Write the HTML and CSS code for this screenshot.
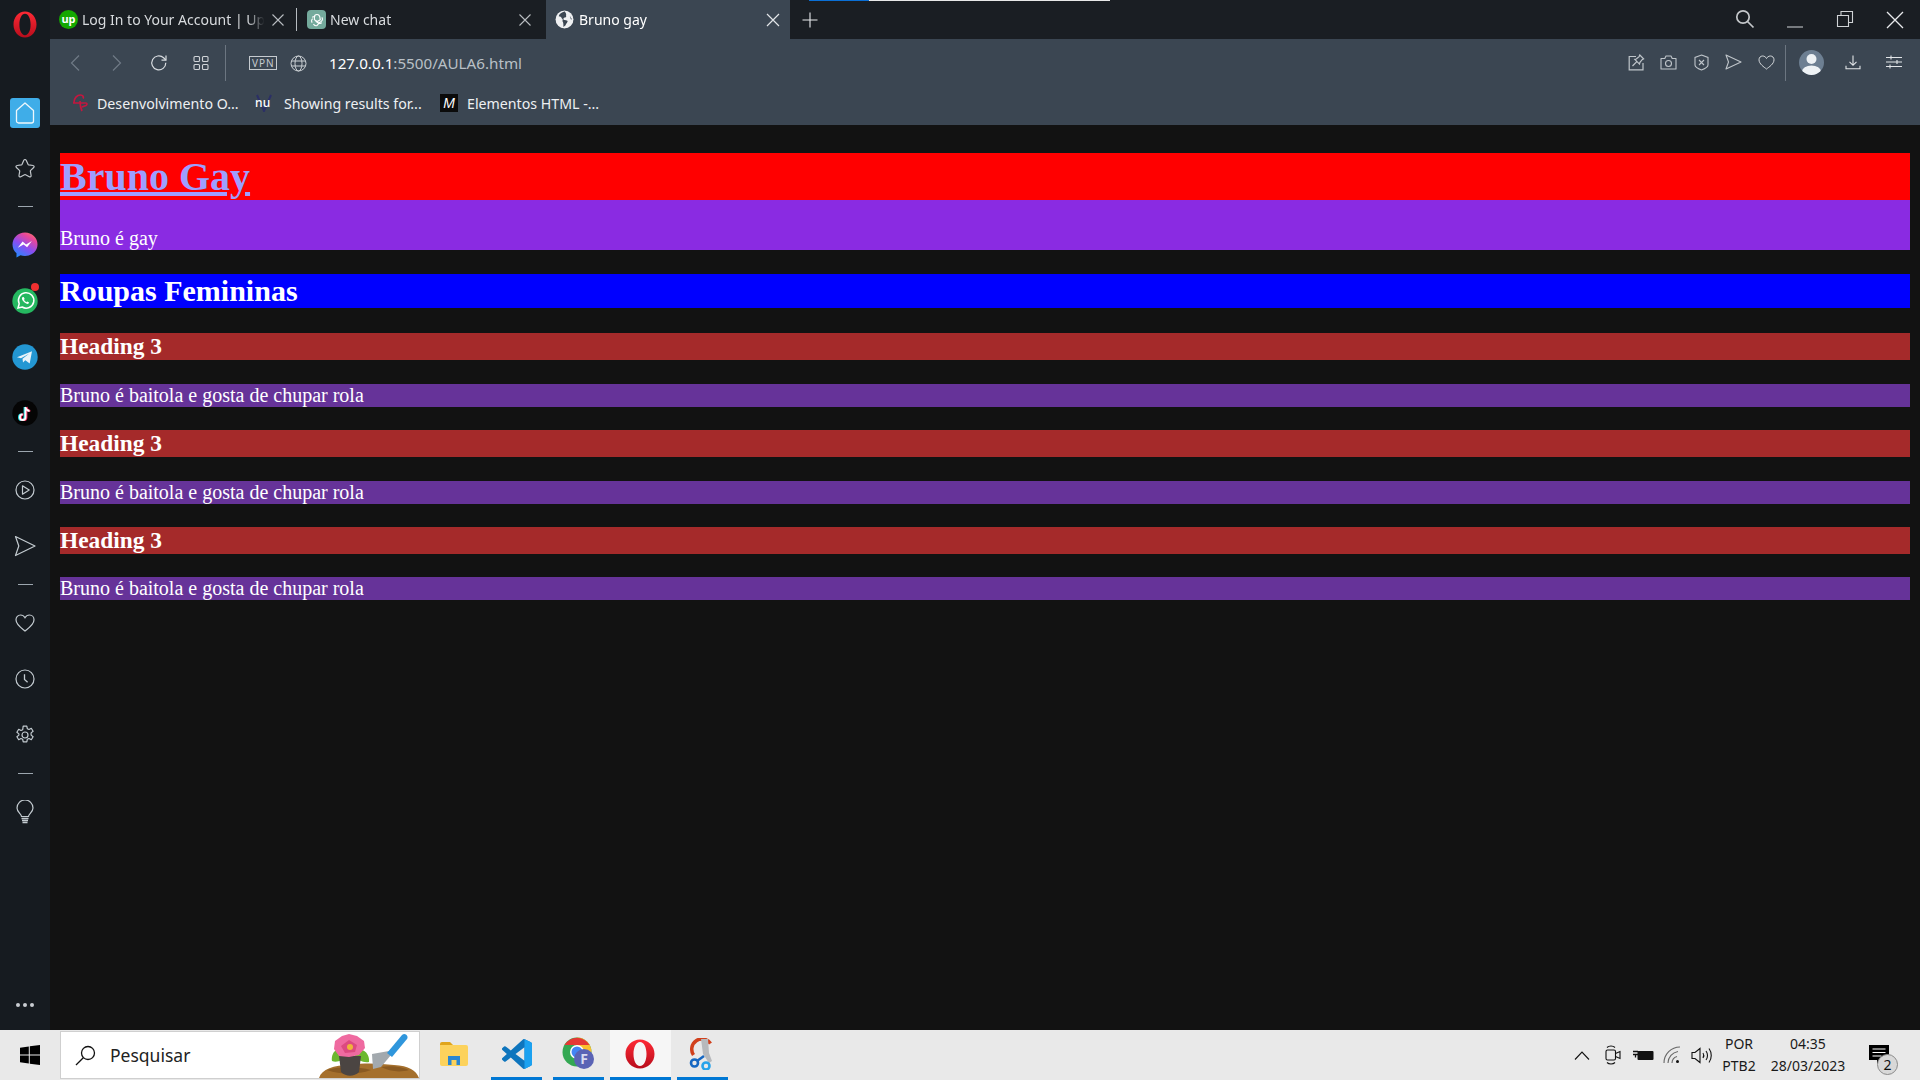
FILE: index.html
```html
<!DOCTYPE html>
<html lang="pt">
<head>
<meta charset="utf-8">
<title>Bruno gay</title>
<link rel="stylesheet" href="styles.css">
</head>
<body>
<div class="screen">
  <div class="app">
    <aside class="rail">
      <div class="rail-logo">
        <svg width="24" height="27" viewBox="0 0 24 27"><defs><linearGradient id="op" x1="0" y1="0" x2="0" y2="1"><stop offset="0" stop-color="#ff2a35"/><stop offset="1" stop-color="#b80d1c"/></linearGradient></defs><path fill="url(#op)" fill-rule="evenodd" d="M12 0.500C18.600 0.500 23.500 6.200 23.500 13.500S18.600 26.500 12 26.500 0.500 20.800 0.500 13.500 5.400 0.500 12 0.500ZM12 2.800C8.600 2.800 6.400 7.600 6.400 13.500S8.600 24.200 12 24.200 17.600 19.400 17.600 13.500 15.400 2.800 12 2.800Z"/></svg>
      </div>
      <div class="slot-v slot-home">
        <div class="home-tile"><svg width="20" height="22" viewBox="0 0 20 22"><path d="M10 1L18.500 8.500V19a2 2 0 0 1-2 2H3.500a2 2 0 0 1-2-2V8.500Z" fill="none" stroke="#eef7fc" stroke-width="1.300" stroke-linejoin="round"/></svg></div>
      </div>
      <div class="slot-v"><svg width="22" height="21" viewBox="0 0 22 21"><path d="M11 1.500c.6 0 1 .4 1.300 1L14 6.200c.2.400.5.600.9.700l4.100.6c1.100.2 1.500 1.300.7 2l-3 2.900c-.3.300-.4.700-.3 1l.7 4.100c.2 1.100-.9 1.800-1.800 1.300l-3.700-2c-.4-.2-.7-.2-1.100 0l-3.700 2c-.9.500-2-.2-1.800-1.300l.7-4.100c.1-.3 0-.7-.3-1l-3-2.900c-.8-.7-.4-1.800.7-2l4.100-.6c.4-.1.700-.3.900-.7L9.700 2.500c.3-.6.700-1 1.300-1Z" fill="none" stroke="#c3c8cc" stroke-width="1.200"/></svg></div>
      <div class="rail-div"></div>
      <div class="slot-v">
        <svg width="26" height="26" viewBox="0 0 26 26"><defs><linearGradient id="ms" x1="0.200" y1="1" x2="0.800" y2="0"><stop offset="0" stop-color="#1e8cff"/><stop offset="0.450" stop-color="#8b4df0"/><stop offset="0.800" stop-color="#e8479a"/><stop offset="1" stop-color="#f8746a"/></linearGradient></defs><path fill="url(#ms)" d="M13 .5C6 .5.500 5.600.500 12.400c0 3.600 1.500 6.700 4 8.800V25.500l4-2.200c1.400.4 2.900.6 4.500.6 7 0 12.500-5 12.500-11.500S20 .5 13 .5Z"/><path fill="#fff" d="M5.800 15.800l4.800-6.200 3.500 2.800 5.800-3.300-4.800 6.200-3.500-2.800Z"/></svg>
      </div>
      <div class="slot-v badge-host">
        <svg width="26" height="26" viewBox="0 0 26 26"><circle cx="13" cy="13" r="12.700" fill="#25b860"/><path d="M6 20l1.200-4.300A7.700 7.700 0 1 1 10.200 19Z" fill="none" stroke="#fff" stroke-width="1.500"/><path d="M10.300 9.300c-1 1 0 3.200 1.700 4.800s3.700 2.400 4.600 1.400l.5-.9-1.900-1.100-.8.700c-.8-.3-2-1.500-2.400-2.400l.7-.8-1-1.900Z" fill="#fff"/></svg>
        <span class="dot-red"></span>
      </div>
      <div class="slot-v">
        <svg width="26" height="26" viewBox="0 0 26 26"><circle cx="13" cy="13" r="12.700" fill="#2397d3"/><path d="M5 13.200L20 7.200 17.700 19.500 13.300 16.200 11 18.500 10.500 14.800 17 9.800 9 14.300Z" fill="#e8f3fa"/></svg>
      </div>
      <div class="slot-v">
        <svg width="26" height="26" viewBox="0 0 26 26"><circle cx="13" cy="13" r="12.700" fill="#050505"/><path d="M13.500 6.500v10.200a2.800 2.800 0 1 1-2.800-2.800M13.500 6.500c.3 2.300 1.800 3.700 4 4" fill="none" stroke="#25e0e6" stroke-width="2.200" transform="translate(-.8 .5)"/><path d="M13.500 6.500v10.200a2.800 2.800 0 1 1-2.800-2.800M13.500 6.500c.3 2.300 1.800 3.700 4 4" fill="none" stroke="#f5305c" stroke-width="2.200" transform="translate(.8 .5)"/><path d="M13.500 6.500v10.200a2.800 2.800 0 1 1-2.800-2.800M13.500 6.500c.3 2.300 1.800 3.700 4 4" fill="none" stroke="#fff" stroke-width="1.800" transform="translate(0 .5)"/></svg>
      </div>
      <div class="rail-div"></div>
      <div class="slot-v"><svg width="20" height="20" viewBox="0 0 20 20" fill="none" stroke="#c3cbd0" stroke-width="1.200"><circle cx="10" cy="10" r="9"/><path d="M7.500 5.800L14.200 10 7.500 14.200Z" stroke-linejoin="round"/></svg></div>
      <div class="slot-v"><svg width="22" height="22" viewBox="0 0 22 22"><path d="M1.500 1.500L21 11 1.500 20.500 4.800 11Z" fill="none" stroke="#c3cbd0" stroke-width="1.200" stroke-linejoin="round"/></svg></div>
      <div class="rail-div"></div>
      <div class="slot-v"><svg width="20" height="18" viewBox="0 0 20 18"><path d="M10 17C7 14.500 1 10.800 1 5.800 1 3 3 1 5.500 1 7.500 1 9 2 10 3.800 11 2 12.500 1 14.500 1 17 1 19 3 19 5.800 19 10.800 13 14.500 10 17Z" fill="none" stroke="#c3cbd0" stroke-width="1.200"/></svg></div>
      <div class="slot-v"><svg width="20" height="20" viewBox="0 0 20 20" fill="none" stroke="#c3cbd0" stroke-width="1.200"><circle cx="10" cy="10" r="9"/><path d="M9.500 5.200V10.500L12.600 13.200" stroke-width="1.300"/></svg></div>
      <div class="slot-v"><svg width="20" height="20" viewBox="0 0 20 20" fill="none" stroke="#c3cbd0" stroke-width="1.200"><circle cx="10" cy="10" r="3"/><path d="M8.200 1.200h3.600l.5 2.500 1.700.8 2.300-1.200 1.800 3-2 1.600v2.200l2 1.600-1.800 3-2.300-1.200-1.700.8-.5 2.500H8.200l-.5-2.500-1.700-.8-2.300 1.200-1.800-3 2-1.600V8.900l-2-1.600 1.800-3 2.300 1.200 1.700-.8Z" stroke-linejoin="round"/></svg></div>
      <div class="rail-div"></div>
      <div class="slot-v"><svg width="18" height="24" viewBox="0 0 18 24" fill="none" stroke="#c3cbd0" stroke-width="1.200"><path d="M5.500 16.500c0-2.500-4.500-4.300-4.500-8.500a8 8 0 0 1 16 0c0 4.200-4.500 6-4.500 8.500Z"/><path d="M5.500 18.500h7M6 20.500h6M6.500 22.500h5" stroke-width="1.300"/></svg></div>
      <div class="rail-more"><span></span><span></span><span></span></div>
    </aside>

    <div class="browser">
      <div class="tabstrip">
        <div class="tab tab-one">
          <span class="fav fav-up">up</span>
          <span class="tab-title">Log In to Your Account | Up</span>
          <svg class="tab-x" width="16" height="16" viewBox="0 0 16 16"><path d="M2.500 2.500l11 11M13.500 2.500l-11 11" stroke="#b9bdc1" stroke-width="1.100"/></svg>
        </div>
        <span class="tab-sep"></span>
        <div class="tab tab-two">
          <span class="fav fav-gpt"><svg width="14" height="14" viewBox="0 0 14 14" fill="none" stroke="#fff" stroke-width="1.100"><path d="M7 1.500a2.800 2.800 0 0 1 2.700 2l.6 3.200-3 1.800-2.900-1.700V4.200A2.700 2.700 0 0 1 7 1.500ZM11.800 4.400a2.800 2.800 0 0 1-.5 4l-2.800 1.600L5.600 8.300M2.200 4.400a2.800 2.800 0 0 1 3-.7M2.200 9.600a2.800 2.800 0 0 1 .5-4M11.800 9.600a2.800 2.800 0 0 1-3 .7L7 12.500a2.800 2.800 0 0 1-3.500-1.500"/></svg></span>
          <span class="tab-title">New chat</span>
          <svg class="tab-x" width="16" height="16" viewBox="0 0 16 16"><path d="M2.500 2.500l11 11M13.500 2.500l-11 11" stroke="#b9bdc1" stroke-width="1.100"/></svg>
        </div>
        <div class="tab tab-active">
          <svg class="fav" width="18" height="18" viewBox="0 0 18 18"><circle cx="9" cy="9" r="8.500" fill="#eef0f2"/><path d="M9 1.500C6.500 2.500 4 3.500 3.500 6c1.500 0 2.500.8 3 2 1 .5 1 1.500.5 2.500.8 1 1 2.500 1 5.500l2-1.500c.5-1.500 2-2.500 2-4-1-.8-2.500-1-3.500-1-1-1-.5-2 .5-2.500 1 .5 2-.5 1.500-1.500.5-1.500-.5-3-1.500-4.500ZM14 5.500c.5 1 1.500 2 2 3.500l-1-.3Z" fill="#3b4652"/></svg>
          <span class="tab-title tab-title-active">Bruno gay</span>
          <svg class="tab-x" width="16" height="16" viewBox="0 0 16 16"><path d="M2 2l12 12M14 2L2 14" stroke="#e2e5e8" stroke-width="1.200"/></svg>
        </div>
        <div class="tab-plus"><svg width="16" height="16" viewBox="0 0 16 16"><path d="M8 .5v15M.5 8h15" stroke="#e9ecee" stroke-width="1.100"/></svg></div>
        <div class="win-controls">
          <div class="win-btn win-up"><svg width="20" height="20" viewBox="0 0 20 20" fill="none" stroke="#c4c7ca" stroke-width="1.700"><circle cx="8" cy="8" r="6.200"/><path d="M12.500 12.500L18.500 18.500"/></svg></div>
          <div class="win-btn"><svg width="18" height="18" viewBox="0 0 18 18"><path d="M1 16h16" stroke="#c4c7ca" stroke-width="1.100"/></svg></div>
          <div class="win-btn win-up"><svg width="18" height="18" viewBox="0 0 18 18" fill="none" stroke="#d0d3d6" stroke-width="1.100"><path d="M1.500 5.500h11v11h-11ZM5 5.500V1.500h11.500v11h-4"/></svg></div>
          <div class="win-btn"><svg width="18" height="18" viewBox="0 0 18 18"><path d="M1 1l16 16M17 1L1 17" stroke="#e8eaec" stroke-width="1.300"/></svg></div>
        </div>
        <div class="loadbar"><span class="loadbar-fill"></span></div>
      </div>

      <div class="toolbar">
        <div class="nav-row">
          <div class="slot"><svg width="12" height="18" viewBox="0 0 12 18"><path d="M10 1.500L2.500 9l7.500 7.500" fill="none" stroke="#6f7a86" stroke-width="1.200"/></svg></div>
          <div class="slot"><svg width="12" height="18" viewBox="0 0 12 18"><path d="M2 1.500L9.500 9 2 16.500" fill="none" stroke="#6f7a86" stroke-width="1.200"/></svg></div>
          <div class="slot"><svg width="18" height="18" viewBox="0 0 18 18" fill="none" stroke="#d8dce0" stroke-width="1.200"><path d="M15.800 8.800A7 7 0 1 1 13.600 3.800L15.800 6"/><path d="M16 1.500V6.200H11.500"/></svg></div>
          <div class="slot"><svg width="16" height="16" viewBox="0 0 16 16" fill="none" stroke="#d0d4d8" stroke-width="1.100"><rect x="1" y="1.500" width="5.500" height="5" rx="1"/><rect x="9.500" y="1.500" width="5.500" height="5" rx="1"/><rect x="1" y="9.500" width="5.500" height="5" rx="1"/><rect x="9.500" y="9.500" width="5.500" height="5" rx="1"/></svg></div>
          <span class="bar-sep bar-sep-left"></span>
          <div class="slot slot-vpn"><span class="vpn">VPN</span></div>
          <div class="slot slot-globe"><svg width="17" height="17" viewBox="0 0 17 17" fill="none" stroke="#ccd1d5" stroke-width="1"><circle cx="8.500" cy="8.500" r="7.500"/><ellipse cx="8.500" cy="8.500" rx="3.500" ry="7.500"/><path d="M1.500 6h14M1.500 11h14"/></svg></div>
          <div class="url"><span class="url-host">127.0.0.1</span>:5500/AULA6.html</div>
          <div class="slot-r"><svg width="17" height="17" viewBox="0 0 17 17" fill="none" stroke="#bfc5ca" stroke-width="1.200"><path d="M8 2.500H1.200V15.800H15V9"/><path d="M11.800 1l3.800 3.800-1.500.8-2.300 3-.3 1.500L6.800 5.400 8.300 5l2.800-2.400ZM8.800 7.600L4.500 12"/></svg></div>
          <div class="slot-r"><svg width="17" height="15" viewBox="0 0 17 15" fill="none" stroke="#bfc5ca" stroke-width="1.100"><path d="M1 3.500h3.800L6 1h5l1.200 2.500H16v10.500H1Z" stroke-linejoin="round"/><circle cx="8.500" cy="8.500" r="3"/></svg></div>
          <div class="slot-r"><svg width="15" height="17" viewBox="0 0 15 17" fill="none" stroke="#bfc5ca" stroke-width="1.100"><path d="M7.500 1L14 3.500V11C14 13 10 15 7.500 16 5 15 1 13 1 11V3.500Z"/><path d="M5 6l5 5M10 6l-5 5"/></svg></div>
          <div class="slot-r"><svg width="17" height="16" viewBox="0 0 17 16"><path d="M1 1l15 7-15 7 2.500-7Z" fill="none" stroke="#bfc5ca" stroke-width="1.100" stroke-linejoin="round"/></svg></div>
          <div class="slot-r"><svg width="17" height="15" viewBox="0 0 17 15"><path d="M8.500 14C6 12 1 9 1 4.800 1 2.500 2.600 1 4.600 1 6.300 1 7.700 2 8.500 3.500 9.300 2 10.700 1 12.400 1 14.400 1 16 2.500 16 4.800 16 9 11 12 8.500 14Z" fill="none" stroke="#d5d9dc" stroke-width="1"/></svg></div>
          <span class="bar-sep bar-sep-right"></span>
          <div class="slot-avatar"><svg width="25" height="25" viewBox="0 0 25 25"><defs><clipPath id="av"><circle cx="12.500" cy="12.500" r="12.500"/></clipPath></defs><circle cx="12.500" cy="12.500" r="12.500" fill="#6d7f92"/><g clip-path="url(#av)" fill="#eef2f5"><circle cx="12.500" cy="9" r="5"/><ellipse cx="12.500" cy="21.500" rx="9.500" ry="6"/></g></svg></div>
          <div class="slot-dl"><svg width="16" height="15" viewBox="0 0 16 15" fill="none" stroke="#e2e5e8" stroke-width="1.100"><path d="M8 .5V10M4.500 6.800L8 10.300l3.500-3.500M1 10.800v3h14v-3"/></svg></div>
          <div class="slot-menu"><svg width="16" height="14" viewBox="0 0 16 14" fill="none" stroke="#e2e5e8" stroke-width="1.100"><path d="M0 2.500h16M0 7h16M0 11.500h16M5 .5v4M11 5v4M4 9.500v4"/></svg></div>
        </div>
        <div class="bookmarks">
          <div class="bookmark bm-one">
            <span class="bm-icon bm-icon-one"><svg width="16" height="18" viewBox="0 0 16 18" fill="none" stroke="#c4173f" stroke-width="1.700"><path d="M2 8.500C2 4 5 1 8.500 1c2.500 0 3.500 2 2.500 3.500M1 9h13c1 0 1.500 1.500 0 2.500L10 13M8 7c0 4 .5 7 2 10"/></svg></span>
            <span class="bm-text">Desenvolvimento O...</span>
          </div>
          <div class="bookmark bm-two">
            <span class="bm-icon bm-icon-two bm-nu-wrap"><svg class="bm-v" width="16" height="18" viewBox="0 0 16 18"><path d="M1 1l7 16 7-16" fill="none" stroke="#2b2f66" stroke-width="2"/></svg><span class="bm-nu">nu</span></span>
            <span class="bm-text">Showing results for...</span>
          </div>
          <div class="bookmark">
            <span class="bm-icon bm-icon-three"><span class="bm-m">M</span></span>
            <span class="bm-text">Elementos HTML -...</span>
          </div>
        </div>
      </div>

      <main class="page">
        <h1 class="title"><a class="title-link" href="#">Bruno Gay</a></h1>
        <p class="lead">Bruno é gay</p>
        <h2 class="section">Roupas Femininas</h2>
        <h3 class="sub">Heading 3</h3>
        <p class="copy">Bruno é baitola e gosta de chupar rola</p>
        <h3 class="sub">Heading 3</h3>
        <p class="copy">Bruno é baitola e gosta de chupar rola</p>
        <h3 class="sub">Heading 3</h3>
        <p class="copy">Bruno é baitola e gosta de chupar rola</p>
      </main>
    </div>
  </div>

  <footer class="taskbar">
    <div class="start"><svg width="20" height="20" viewBox="0 0 20 20" fill="#000"><path d="M0 2.800L8.800 1.500V9.500H0ZM9.800 1.300L20 0V9.500H9.800ZM0 10.500H8.800V18.500L0 17.200ZM9.800 10.500H20V20L9.800 18.700Z"/></svg></div>
    <div class="search">
      <svg class="search-glass" width="21" height="21" viewBox="0 0 21 21" fill="none" stroke="#111" stroke-width="1.300"><circle cx="13" cy="8" r="6.500"/><path d="M8.300 12.700L1 20"/></svg>
      <span class="search-text">Pesquisar</span>
      <svg class="search-art" width="100" height="46" viewBox="0 0 100 46">
        <path d="M0 46C3 37 14 33 32 33 48 30 62 32 75 33 90 34 97 38 100 46Z" fill="#a5702d"/>
        <path d="M8 38C22 34 40 35 52 38 38 43 22 43 8 38ZM62 35C72 33 84 35 90 38 80 41 70 39 62 35Z" fill="#8a5a22"/>
        <path d="M53 22L70 19 72 23 62 35 54 37Z" fill="#a3a9ae"/>
        <path d="M68 21L83 3C86 0 90 4 88 7L73 25Z" fill="#2f96dc"/>
        <path d="M24 19C15 14 12 24 13 29 18 31 24 28 28 25ZM38 19C46 15 51 24 50 30 44 31 39 28 35 25Z" fill="#6cb82f"/>
        <path d="M20 24H42L40 40C35 45 27 45 22 40Z" fill="#4b4542"/>
        <path d="M30 2L38 4 45 9 46 16 40 23 30 25 20 24 15 17 16 9 23 4Z" fill="#ef6aa0"/>
        <path d="M30 8L38 13 36 20 26 21 22 14Z" fill="#dc4a80"/>
        <circle cx="31" cy="15" r="3" fill="#f0b43a"/>
      </svg>
    </div>
    <div class="task task-files">
      <svg width="28" height="24" viewBox="0 0 28 24"><path d="M0 2a2 2 0 0 1 2-2h8l3 3H0Z" fill="#e0a51c"/><path d="M0 3h26a2 2 0 0 1 2 2v17a2 2 0 0 1-2 2H2a2 2 0 0 1-2-2Z" fill="#fcd25c"/><path d="M8 23V14h12v9h-3.500v-5h-5v5Z" fill="#2a86d1"/></svg>
    </div>
    <div class="task task-code">
      <svg width="30" height="30" viewBox="0 0 24 24"><path fill="#0e75bd" d="M23.150 2.587L18.210.21a1.494 1.494 0 0 0-1.705.29l-9.460 8.630-4.120-3.128a.999.999 0 0 0-1.276.057L.327 7.261A1 1 0 0 0 .326 8.740L3.899 12 .326 15.260a1 1 0 0 0 .001 1.479L1.650 17.940a.999.999 0 0 0 1.276.057l4.120-3.128 9.460 8.630a1.492 1.492 0 0 0 1.704.29l4.942-2.377A1.500 1.500 0 0 0 24 20.060V3.939a1.500 1.500 0 0 0-.85-1.352zm-5.146 14.861L10.826 12l7.178-5.448v10.896z"/><path fill="#1ba1f0" d="M18 .1l5.150 2.487A1.500 1.500 0 0 1 24 3.939V20.060a1.500 1.500 0 0 1-.85 1.352L18 23.900Z"/></svg>
    </div>
    <div class="task task-chrome">
      <svg width="34" height="34" viewBox="0 0 34 34"><circle cx="15" cy="15" r="14.500" fill="#34a853"/><path d="M15 .5A14.500 14.500 0 0 1 29.500 15H15Z" fill="#fbc02d"/><path d="M2.500 8A14.500 14.500 0 0 1 27.500 8H15Z" fill="#e53935"/><circle cx="15" cy="15" r="7" fill="#fff"/><circle cx="15" cy="15" r="5.500" fill="#4285f4"/><circle cx="22" cy="22" r="10" fill="#5a63b5"/><text class="chrome-f" x="22" y="27" text-anchor="middle">F</text></svg>
    </div>
    <div class="task task-opera">
      <svg width="30" height="30" viewBox="0 0 30 30"><defs><linearGradient id="op2" x1="0" y1="0" x2="0" y2="1"><stop offset="0" stop-color="#ff2a35"/><stop offset="1" stop-color="#b80d1c"/></linearGradient></defs><path fill="url(#op2)" fill-rule="evenodd" d="M15 .5C23 .5 29.500 7 29.500 15S23 29.500 15 29.500.5 23 .5 15 7 .5 15 .5ZM15 3C11 3 8.500 8.500 8.500 15S11 27 15 27 21.500 21.500 21.500 15 19 3 15 3Z"/></svg>
    </div>
    <div class="task task-snip">
      <svg width="28" height="32" viewBox="0 0 28 32"><path d="M4.500 17A10 10 0 1 1 21.500 5.500" fill="none" stroke="#d1401c" stroke-width="3.500"/><path d="M12 1l7 0 1 14 3 8-3 2-6-9Z" fill="#b7b9bc"/><circle cx="5.500" cy="25" r="3.500" fill="none" stroke="#1667c2" stroke-width="2.600"/><circle cx="17" cy="28" r="3.500" fill="none" stroke="#27a3ea" stroke-width="2.600"/><path d="M8 23l7-5" stroke="#1667c2" stroke-width="2.500"/></svg>
    </div>
    <div class="tray">
      <div class="tray-slot tray-w30"><svg width="16" height="9" viewBox="0 0 16 9"><path d="M1 8.500L8 1l7 7.500" fill="none" stroke="#111" stroke-width="1.100"/></svg></div>
      <div class="tray-slot tray-w32"><svg width="16" height="20" viewBox="0 0 16 20" fill="none" stroke="#111" stroke-width="1.100"><path d="M2 2.500C4 .5 8 .5 10 2.500M2 17.500c2 2 6 2 8 0"/><rect x="1" y="5" width="9.500" height="10" rx="1.500"/><path d="M10.500 8.500L15 6.500v7l-4.500-2"/></svg></div>
      <div class="tray-slot tray-w28"><svg width="21" height="12" viewBox="0 0 21 12"><path d="M0 2.500h5M0 5.500h5M2.500 5.500v3" stroke="#111" stroke-width="1.300"/><rect x="4.500" y="2" width="16" height="9" rx="1" fill="#111"/></svg></div>
      <div class="tray-slot tray-w30"><svg width="18" height="18" viewBox="0 0 18 18" fill="none" stroke="#111" stroke-width="1.100"><path d="M1 17A16 16 0 0 1 17 1" opacity=".6"/><path d="M5 17A12 12 0 0 1 15 5.500" opacity=".6"/><path d="M9 17a7 7 0 0 1 5-6.500" opacity=".6"/><circle cx="14.500" cy="15.500" r="1.500" fill="#111" stroke="none"/></svg></div>
      <div class="tray-slot tray-w28"><svg width="21" height="17" viewBox="0 0 21 17" fill="none" stroke="#111" stroke-width="1.100"><path d="M1 5.500h3L9 1.500v14l-5-4H1Z"/><path d="M12 6c1 1.500 1 3.500 0 5M15 4c2 2.500 2 6.500 0 9M18 1.500c3 4 3 10 0 14"/></svg></div>
      <div class="tray-lang"><span>POR</span><span>PTB2</span></div>
      <div class="tray-clock"><span>04:35</span><span>28/03/2023</span></div>
      <div class="tray-notify">
        <svg width="20" height="19" viewBox="0 0 20 19"><path d="M0 0H20V15H12L8 19V15H0Z" fill="#000"/><path d="M3.500 4h13M3.500 7.500h13M3.500 11h9" stroke="#fff" stroke-width="1.100"/></svg>
        <span class="notify-badge">2</span>
      </div>
    </div>
  </footer>
</div>
</body>
</html>
```

FILE: styles.css
```css
* { box-sizing: border-box; }
html, body { margin: 0; padding: 0; height: 100%; background: #121212; }
body { overflow: hidden; font-family: "Noto Sans", "Open Sans", sans-serif; }
svg { display: block; flex: none; }

.screen { width: 1920px; height: 1080px; display: flex; flex-direction: column; }
.app { flex: 1; display: flex; min-height: 0; }

/* Left rail */
.rail { width: 50px; flex: none; background: #161b20; display: flex; flex-direction: column; align-items: center; }
.rail-logo { height: 49px; margin-bottom: 36px; display: flex; align-items: center; justify-content: center; }
.slot-v { height: 56px; width: 100%; display: flex; align-items: center; justify-content: center; flex: none; }
.slot-home { height: 55px; }
.home-tile { width: 30px; height: 30px; border-radius: 3px; background: #3fade8; display: flex; align-items: center; justify-content: center; }
.rail-div { height: 21px; width: 100%; flex: none; display: flex; align-items: center; justify-content: center; }
.rail-div::before { content: ""; width: 15px; height: 1px; background: #9ca6ae; }
.badge-host { position: relative; }
.dot-red { position: absolute; left: 31px; top: 10px; width: 8px; height: 8px; border-radius: 50%; background: #f03030; }
.rail-more { margin-top: auto; margin-bottom: 23px; display: flex; gap: 3px; }
.rail-more span { width: 4px; height: 4px; border-radius: 50%; background: #c9cdd1; }

/* Browser column */
.browser { flex: 1; min-width: 0; display: flex; flex-direction: column; }
.tabstrip { height: 39px; flex: none; background: #1a1e23; display: flex; position: relative; }
.tab { height: 39px; display: flex; align-items: center; flex: none; font-size: 14px; color: #d8dbde; }
.tab-one { width: 246px; padding: 0 10px 0 9px; }
.tab-two { width: 249px; padding: 0 13px 0 10px; }
.tab-active { width: 244px; padding: 0 9px; background: #3b4652; color: #fff; }
.tab-sep { width: 1px; height: 23px; align-self: center; background: #b7bcc1; flex: none; }
.fav { width: 19px; height: 19px; flex: none; border-radius: 50%; display: flex; align-items: center; justify-content: center; }
.fav-up { background: #14a800; color: #fff; font-size: 11px; font-weight: 700; line-height: 1; padding-bottom: 2px; }
.fav-gpt { background: #74aa9c; border-radius: 4px; }
.tab-title { flex: 1; min-width: 0; margin-left: 4px; white-space: nowrap; -webkit-mask-image: linear-gradient(90deg, #000 88%, transparent 97%); mask-image: linear-gradient(90deg, #000 88%, transparent 97%); }
.tab-title-active { margin-left: 5px; }
.tab-x { flex: none; }
.tab-plus { width: 40px; display: flex; align-items: center; justify-content: center; flex: none; }
.win-controls { margin-left: auto; display: flex; }
.win-btn { width: 50px; height: 39px; display: flex; align-items: center; justify-content: center; }
.win-up { padding-bottom: 2px; }
.loadbar { position: absolute; left: 759px; top: 0; width: 301px; height: 1px; background: #e8e8e8; }
.loadbar-fill { display: block; width: 60px; height: 1px; background: #0a6fd6; }

/* Toolbar */
.toolbar { height: 86px; flex: none; background: #3b4652; display: flex; flex-direction: column; color: #fff; }
.nav-row { height: 48px; flex: none; display: flex; align-items: center; padding: 0 12px 0 4px; }
.slot { width: 42px; height: 36px; flex: none; display: flex; align-items: center; justify-content: center; }
.slot-vpn { width: 36px; }
.slot-globe { width: 34px; }
.bar-sep { width: 1px; height: 36px; background: #6c7681; flex: none; }
.bar-sep-left { margin: 0 19px 0 3px; }
.bar-sep-right { margin-left: 2.500px; }
.vpn { border: 1px solid #c6cbd0; padding: 0 2px; font-size: 10px; line-height: 12px; letter-spacing: 1px; color: #c6cbd0; height: 14px; width: 28px; flex: none; text-align: center; }
.url { flex: 1; min-width: 0; margin-left: 14px; font-size: 15.200px; color: #b9c0c6; white-space: nowrap; }
.url-host { color: #fff; }
.slot-r { width: 32.500px; height: 36px; padding-bottom: 2px; flex: none; display: flex; align-items: center; justify-content: center; }
.slot-avatar { width: 50px; padding-bottom: 2px; flex: none; display: flex; justify-content: center; }
.slot-dl { width: 28px; margin-left: 3px; padding-bottom: 2px; flex: none; display: flex; justify-content: center; }
.slot-menu { width: 28px; margin-left: 13px; padding-bottom: 2px; flex: none; display: flex; justify-content: center; }

.bookmarks { flex: 1; display: flex; align-items: center; padding: 0 0 6px 22px; font-size: 14.200px; color: #eef0f2; }
.bookmark { display: flex; align-items: center; flex: none; white-space: nowrap; }
.bm-one { width: 183px; }
.bm-two { width: 185px; }
.bm-icon { height: 18px; display: block; flex: none; }
.bm-icon-one { width: 25px; }
.bm-icon-two { width: 29px; }
.bm-icon-three { width: 27px; }
.bm-nu-wrap { position: relative; }
.bm-v { position: absolute; left: 1px; top: 0; }
.bm-nu { display: block; position: relative; width: 18px; font-size: 12px; font-weight: 500; line-height: 17px; letter-spacing: .3px; color: #fff; }
.bm-m { display: block; width: 18px; height: 18px; background: #0b0b0b; color: #fff; font-family: "Liberation Sans", sans-serif; font-size: 14px; font-style: italic; line-height: 18px; text-align: center; }

/* Page content */
.page { flex: 1; min-height: 0; background: #121212; padding: 28px 10px 0; font-family: "Liberation Serif", serif; color: #fff; }
.title { margin: 0; background: #ff0000; font-size: 40px; line-height: 47px; font-weight: 700; }
.title-link { color: #9e9eff; }
.lead { margin: 0; padding-top: 27px; background: #8a2be2; font-size: 20px; line-height: 23px; }
.section { margin: 24px 0 25px; background: #0000ff; font-size: 30px; line-height: 34px; font-weight: 700; }
.sub { margin: 23px 0; background: #a52a2a; font-size: 23.400px; line-height: 27px; font-weight: 700; }
.copy { margin: 24px 0 23px; background: #663399; font-size: 20px; line-height: 23px; }
.copy:last-child { margin-top: 23px; }

/* Taskbar */
.taskbar { height: 50px; flex: none; background: #e9e9e9; display: flex; align-items: stretch; color: #111; }
.start { width: 60px; flex: none; display: flex; align-items: center; justify-content: center; }
.search { width: 360px; flex: none; margin: 1px 0; background: #fff; border: 1px solid #cfcfcf; display: flex; align-items: center; padding-left: 14px; overflow: hidden; }
.search-glass { flex: none; }
.search-text { margin-left: 14px; font-size: 17.500px; color: #222; }
.search-art { margin-left: auto; align-self: flex-end; }
.task { flex: none; width: 51px; margin-left: 11px; display: flex; align-items: center; justify-content: center; border-bottom: 3px solid #0078d4; }
.task-files { margin-left: 8px; border-bottom-color: transparent; }
.task-code { margin-left: 12px; }
.task-opera { width: 61px; margin-left: 6px; padding-right: 2px; background: #f6f6f6; }
.task-snip { margin-left: 6px; }
.chrome-f { font-family: "Noto Sans", sans-serif; font-size: 14px; font-weight: 700; fill: #d8dbf0; }
.tray { margin-left: auto; display: flex; align-items: stretch; font-size: 14px; color: #1a1a1a; }
.tray-slot { display: flex; align-items: center; justify-content: center; flex: none; }
.tray-w30 { width: 30px; }
.tray-w32 { width: 32px; }
.tray-w28 { width: 28px; }
.tray-lang { width: 48px; display: flex; flex-direction: column; align-items: center; justify-content: center; gap: 2px; line-height: 20px; }
.tray-clock { width: 90px; display: flex; flex-direction: column; align-items: center; justify-content: center; gap: 2px; line-height: 20px; }
.tray-notify { width: 67px; position: relative; padding: 15px 0 0 16px; }
.notify-badge { position: absolute; left: 24px; top: 24px; width: 21px; height: 21px; border-radius: 50%; border: 1px solid #8a8a8a; background: #d8d8d8; font-size: 14px; line-height: 19px; text-align: center; color: #111; }
```
